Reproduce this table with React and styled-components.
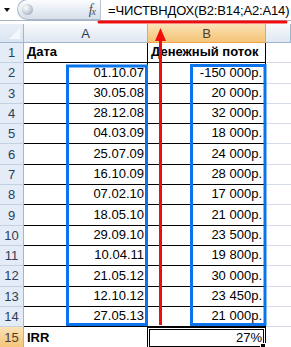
import React from 'react';
import styled, { createGlobalStyle, css } from 'styled-components';

const GlobalStyle = createGlobalStyle`
  html, body { margin: 0; padding: 0; background: #fff; overflow: hidden; }
  body { font-family: "Liberation Sans", Arial, sans-serif; }
`;

const ROW_H = 20.3;
const COLS = '24px 124px 118px 1fr';

const Sheet = styled.div`
  position: relative;
  width: 291px; height: 347px;
  overflow: hidden;
  background: #fff;
`;

/* ---------- formula bar ---------- */
const FormulaBar = styled.div`
  display: flex; align-items: stretch;
  height: 20px;
  border-bottom: 1px solid #a6b6ca;
  background: #fff;
`;
const NameArrow = styled.div`
  flex: 0 0 17px;
  display: flex; align-items: center; justify-content: center;
  &::after {
    content: ''; display: block;
    border-left: 3.5px solid transparent;
    border-right: 3.5px solid transparent;
    border-top: 4px solid #111;
    margin-left: -4px;
  }
`;
const Pill = styled.div`
  flex: 0 0 84px;
  display: flex; align-items: center; justify-content: space-between;
  padding: 0 5px 0 4px;
  box-sizing: border-box;
  margin-top: -1px;
  border: 1px solid #a9b7c9;
  border-right: 1px solid #b7c3d2;
  border-radius: 11px 0 0 11px;
  background: linear-gradient(#fbfcfe, #e6ecf4 55%, #d7dfea);
`;
const Orb = styled.span`
  width: 11px; height: 11px; border-radius: 50%;
  background: radial-gradient(circle at 35% 35%, #ffffff, #c3cad4 55%, #8f99a6);
`;
const Fx = styled.span`
  font-family: "Liberation Serif", "Times New Roman", serif;
  font-style: italic;
  font-size: 14px;
  color: #4d4d4d;
  letter-spacing: -1px;
  sub { font-size: 10px; vertical-align: -1px; }
`;
const FormulaText = styled.div`
  flex: 1;
  display: flex; align-items: center;
  padding-left: 7px;
  font-size: 13px;
  letter-spacing: -0.15px;
  color: #000;
  white-space: nowrap;
`;
const Gap = styled.div` height: 3px; background: #fff; `;

/* ---------- grid ---------- */
const Row = styled.div`
  display: grid;
  grid-template-columns: ${COLS};
  height: ${({ $h }) => $h}px;
`;

const hot = css`
  background: linear-gradient(#fbe3b8, #f7cf8d 60%, #f5c47a);
  border-color: #f0a54a;
`;

const Corner = styled.div`
  position: relative;
  background: linear-gradient(#e9eff7, #dbe5f1);
  border-right: 1px solid #9eb6ce;
  border-bottom: 1px solid #9eb6ce;
  &::after {
    content: ''; position: absolute; right: 3px; bottom: 3px;
    border-left: 11px solid transparent;
    border-bottom: 11px solid #f4f7fb;
  }
`;

const ColHead = styled.div`
  display: flex; align-items: center; justify-content: center;
  font-size: 13px; color: #2c3e57;
  background: linear-gradient(#f8fafc, #eaeff6 55%, #e0e7f1);
  border-right: 1px solid #9eb6ce;
  border-bottom: 1px solid #9eb6ce;
  ${({ $hot }) => $hot && hot}
  ${({ $hot }) => $hot && css`color: #4a4033;`}
`;

const RowHead = styled.div`
  display: flex; align-items: center; justify-content: center;
  font-size: 13px; color: #2c3e57;
  background: #e4ecf7;
  border-right: 1px solid #9eb6ce;
  border-bottom: 1px solid #c3d1e2;
  ${({ $hot }) => $hot && hot}
  ${({ $hot }) => $hot && css`color: #4a4033; border-right-color: #f0a54a;`}
`;

const Cell = styled.div`
  position: relative;
  display: flex; align-items: flex-end;
  justify-content: ${({ $right }) => ($right ? 'flex-end' : 'flex-start')};
  box-sizing: border-box;
  padding: 0 3px 3px 3px;
  font-size: 13px;
  font-weight: ${({ $bold }) => ($bold ? 700 : 400)};
  color: #000;
  white-space: nowrap;
  border-bottom: 1px solid ${({ $grid }) => ($grid ? '#d5dce7' : '#000')};
  border-right: ${({ $grid }) => ($grid ? 'none' : '1px solid #000')};
  ${({ $active }) => $active && css`
    border: 3px double #000;
    padding: 0 1px 1px 1px;
    margin-left: -1px;
  `}
`;

const FillHandle = styled.span`
  position: absolute; right: -3px; bottom: -3px;
  width: 4px; height: 4px;
  background: #000;
  border: 1px solid #fff;
`;

/* red arrow, red underline and the two blue range frames */
const Marks = styled.svg`
  position: absolute; left: 0; top: 0;
  pointer-events: none;
`;

const data = [
  ['01.10.07', '-150 000р.'],
  ['30.05.08', '20 000р.'],
  ['28.12.08', '32 000р.'],
  ['04.03.09', '18 000р.'],
  ['25.07.09', '24 000р.'],
  ['16.10.09', '28 000р.'],
  ['07.02.10', '17 000р.'],
  ['18.05.10', '21 000р.'],
  ['29.09.10', '23 500р.'],
  ['10.04.11', '19 800р.'],
  ['21.05.12', '30 000р.'],
  ['12.10.12', '23 450р.'],
  ['27.05.13', '21 000р.'],
];

export default function App() {
  return (
    <Sheet>
      <GlobalStyle />
      <FormulaBar>
        <NameArrow />
        <Pill>
          <Orb />
          <Fx>f<sub>x</sub></Fx>
        </Pill>
        <FormulaText>=ЧИСТВНДОХ(B2:B14;A2:A14)</FormulaText>
      </FormulaBar>
      <Gap />

      <Row $h={19}>
        <Corner />
        <ColHead>A</ColHead>
        <ColHead $hot>B</ColHead>
        <ColHead />
      </Row>

      <Row $h={ROW_H}>
        <RowHead>1</RowHead>
        <Cell $bold>Дата</Cell>
        <Cell $bold>Денежный поток</Cell>
        <Cell $grid />
      </Row>

      {data.map(([date, sum], i) => (
        <Row key={date} $h={ROW_H}>
          <RowHead>{i + 2}</RowHead>
          <Cell $right>{date}</Cell>
          <Cell $right>{sum}</Cell>
          <Cell $grid />
        </Row>
      ))}

      <Row $h={ROW_H}>
        <RowHead $hot>15</RowHead>
        <Cell $bold>IRR</Cell>
        <Cell $right $active>27%<FillHandle /></Cell>
        <Cell $grid />
      </Row>

      <Marks width="291" height="347" viewBox="0 0 291 347">
        <line x1="99" y1="22" x2="286" y2="22" stroke="#f20d0d" strokeWidth="3" strokeLinecap="round" />
        <line x1="160.5" y1="38" x2="160.5" y2="325" stroke="#f20d0d" strokeWidth="3" />
        <polygon points="160.5,28 166,41 155,41" fill="#f20d0d" />
        <rect x="67.5" y="66" width="79" height="258.5" fill="none" stroke="#0a74ee" strokeWidth="3" />
        <rect x="191.5" y="65.5" width="73.5" height="259" fill="none" stroke="#0a74ee" strokeWidth="3" />
      </Marks>
    </Sheet>
  );
}
